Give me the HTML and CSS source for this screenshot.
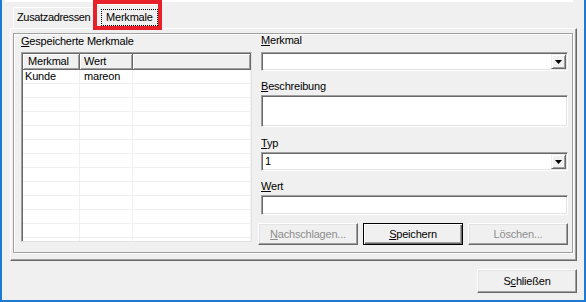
FILE: index.html
```html
<!DOCTYPE html>
<html lang="de">
<head>
    <meta charset="UTF-8">
    <title>Merkmale</title>
    <link rel="stylesheet" href="styles.css">
</head>
<body>
    <div class="window">
        <div class="topline"></div>

        <div class="tabs">
            <div class="tab">Zusatzadressen</div>
            <div class="tab active"><span class="focus">Merkmale</span></div>
            <div class="highlight"></div>
        </div>

        <div class="panel">
            <div class="frame">
                <div class="left-col">
                    <div class="label"><u>G</u>espeicherte Merkmale</div>
                    <div class="listview">
                        <div class="lv-head">
                            <div class="hcell c1">Merkmal</div>
                            <div class="hcell c2">Wert</div>
                            <div class="hcell c3"></div>
                        </div>
                        <div class="lv-body">
                            <div class="row"><div class="cell c1 first">Kunde</div><div class="cell c2">mareon</div><div class="cell c3"></div></div>
                            <div class="row"><div class="cell c1"></div><div class="cell c2"></div><div class="cell c3"></div></div>
                            <div class="row"><div class="cell c1"></div><div class="cell c2"></div><div class="cell c3"></div></div>
                            <div class="row"><div class="cell c1"></div><div class="cell c2"></div><div class="cell c3"></div></div>
                            <div class="row"><div class="cell c1"></div><div class="cell c2"></div><div class="cell c3"></div></div>
                            <div class="row"><div class="cell c1"></div><div class="cell c2"></div><div class="cell c3"></div></div>
                            <div class="row"><div class="cell c1"></div><div class="cell c2"></div><div class="cell c3"></div></div>
                            <div class="row"><div class="cell c1"></div><div class="cell c2"></div><div class="cell c3"></div></div>
                            <div class="row"><div class="cell c1"></div><div class="cell c2"></div><div class="cell c3"></div></div>
                            <div class="row"><div class="cell c1"></div><div class="cell c2"></div><div class="cell c3"></div></div>
                            <div class="row"><div class="cell c1"></div><div class="cell c2"></div><div class="cell c3"></div></div>
                            <div class="row"><div class="cell c1"></div><div class="cell c2"></div><div class="cell c3"></div></div>
                            <div class="row"><div class="cell c1"></div><div class="cell c2"></div><div class="cell c3"></div></div>
                        </div>
                    </div>
                </div>

                <div class="right-col">
                    <div class="label lbl-merkmal"><u>M</u>erkmal</div>
                    <div class="combo">
                        <span class="combo-text"></span>
                        <span class="drop"><svg width="7" height="4" viewBox="0 0 7 4"><polygon points="0,0 7,0 3.5,4" fill="#000"/></svg></span>
                    </div>

                    <div class="label lbl-beschreibung"><u>B</u>eschreibung</div>
                    <div class="textbox tall"></div>

                    <div class="label lbl-typ"><u>T</u>yp</div>
                    <div class="combo">
                        <span class="combo-text">1</span>
                        <span class="drop"><svg width="7" height="4" viewBox="0 0 7 4"><polygon points="0,0 7,0 3.5,4" fill="#000"/></svg></span>
                    </div>

                    <div class="label lbl-wert"><u>W</u>ert</div>
                    <div class="textbox"></div>

                    <div class="btn-row">
                        <div class="btn disabled"><u>N</u>achschlagen...</div>
                        <div class="btn default"><u>S</u>peichern</div>
                        <div class="btn disabled">Löschen...</div>
                    </div>
                </div>
            </div>
        </div>

        <div class="footer">
            <div class="btn close">S<u>c</u>hließen</div>
        </div>
    </div>
</body>
</html>
```

FILE: styles.css
```css
* {
    box-sizing: border-box;
}

body {
    margin: 0;
    font-family: "Liberation Sans", Arial, sans-serif;
    font-size: 11px;
    letter-spacing: -0.2px;
    color: #000;
    background: #f0f0f0;
}

.window {
    width: 586px;
    height: 302px;
    background: #f0f0f0;
    border-left: 2px solid #1c7ad0;
    border-right: 2px solid #1c7ad0;
    border-bottom: 2px solid #1c7ad0;
}

.topline {
    margin-left: 3px;
    width: 568px;
    height: 2px;
    background: #fff;
}

/* tabs */
.tabs {
    position: relative;
    display: flex;
    align-items: flex-end;
    height: 26px;
    padding-left: 11px;
}

.tab {
    height: 21px;
    width: 82px;
    padding-left: 3px;
    line-height: 18px;
    letter-spacing: -0.35px;
    border-top: 1px solid #fff;
    border-left: 1px solid #fff;
    border-right: 1px solid #696969;
    box-shadow: inset -1px 0 #a0a0a0;
}

.tab.active {
    height: 25px;
    width: 66px;
    padding: 4px 0 0 5px;
    line-height: 15px;
    letter-spacing: -0.2px;
    position: relative;
    margin-bottom: -1px;
    background: #f0f0f0;
    z-index: 1;
}

.focus {
    display: inline-block;
    padding: 0 4px;
    height: 17px;
    line-height: 15px;
    border: 1px dotted #000;
}

.highlight {
    position: absolute;
    left: 91px;
    top: -2px;
    width: 69px;
    height: 30px;
    border: 4px solid #e8202a;
    z-index: 2;
}

/* tab panel */
.panel {
    margin-left: 8px;
    width: 567px;
    height: 233px;
    border-top: 1px solid #fff;
    border-left: 1px solid #fff;
    border-right: 1px solid #696969;
    border-bottom: 1px solid #696969;
    box-shadow: inset -1px -1px #a0a0a0;
    padding: 4px 0 0 2px;
}

.frame {
    display: flex;
    width: 560px;
    height: 220px;
    border: 1px solid #a0a0a0;
    box-shadow: inset 1px 1px #fff, 1px 1px #fff;
}

.label {
    height: 13px;
    line-height: 13px;
}

.left-col {
    width: 244px;
    padding: 1px 0 0 7px;
}

.right-col {
    width: 310px;
    display: flex;
    flex-direction: column;
}

.right-col .label {
    padding-left: 3px;
}

.lbl-merkmal { margin-bottom: 5px; }
.lbl-beschreibung { margin: 9px 0 2px; }
.lbl-typ { margin: 10px 0 2px; }
.lbl-wert { margin: 9px 0 2px; }

/* listview */
.listview {
    margin-top: 4px;
    width: 231px;
    height: 190px;
    background: #fff;
    border: 1px solid;
    border-color: #a0a0a0 #e3e3e3 #e3e3e3 #a0a0a0;
    box-shadow: inset 1px 1px #696969;
    padding: 1px 0 0 1px;
    overflow: hidden;
}

.lv-head {
    display: flex;
    height: 16px;
}

.hcell {
    height: 16px;
    line-height: 14px;
    background: #f0f0f0;
    border-right: 1px solid #696969;
    border-bottom: 1px solid #696969;
    box-shadow: inset 1px 1px #fff, inset -1px -1px #a0a0a0;
}

.c1 { width: 57px; }
.c2 { width: 53px; }
.c3 { flex: 1; }

.hcell.c1 { padding-left: 5px; }
.hcell.c2 { padding-left: 4px; }

.row {
    display: flex;
    height: 14px;
    border-bottom: 1px solid #f0f0f0;
}

.cell {
    height: 13px;
    line-height: 13px;
    border-right: 1px solid #f0f0f0;
    padding-left: 4px;
}

.cell.first { padding-left: 2px; }

/* inputs */
.combo, .textbox {
    margin-left: 3px;
    width: 307px;
    background: #fff;
    border: 1px solid;
    border-color: #a0a0a0 #fff #fff #a0a0a0;
    box-shadow: inset 1px 1px #696969, inset -1px -1px #e3e3e3;
}

.combo {
    height: 19px;
    display: flex;
    align-items: center;
    padding: 1px 1px 1px 3px;
}

.combo-text {
    flex: 1;
    line-height: 13px;
}

.drop {
    width: 15px;
    height: 15px;
    display: flex;
    align-items: center;
    justify-content: center;
    background: #f0f0f0;
    border: 1px solid;
    border-color: #f0f0f0 #696969 #696969 #f0f0f0;
    box-shadow: inset 1px 1px #fff, inset -1px -1px #a0a0a0;
}

.textbox { height: 20px; }
.textbox.tall { height: 32px; }

/* buttons */
.btn-row {
    display: flex;
    gap: 5px;
    margin-top: 8px;
}

.btn {
    width: 100px;
    height: 22px;
    line-height: 20px;
    text-align: center;
    background: #f0f0f0;
    border: 1px solid;
    border-color: #fff #696969 #696969 #fff;
    box-shadow: inset -1px -1px #a0a0a0, inset 1px 1px #e3e3e3;
}

.btn.disabled {
    color: #8d8d8d;
}

.btn.default {
    border: 1px solid #000;
    box-shadow: inset 1px 1px #fff, inset -1px -1px #696969, inset -2px -2px #a0a0a0;
}

.footer {
    display: flex;
    justify-content: flex-end;
    padding-right: 7px;
    margin-top: 8px;
}

.btn.close {
    height: 24px;
    line-height: 22px;
}
```
